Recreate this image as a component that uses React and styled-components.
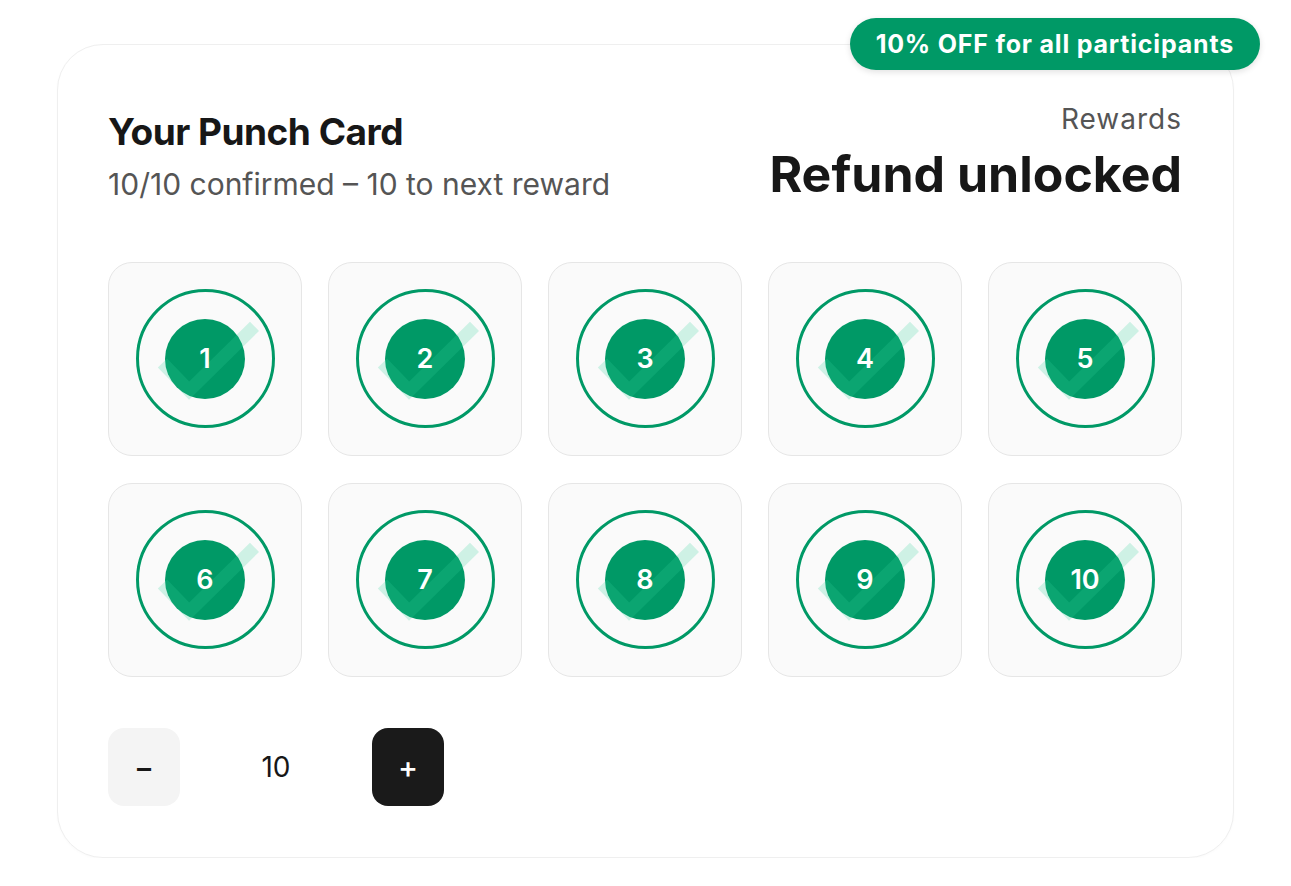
import React, { useState } from "react";
import styled, { createGlobalStyle } from "styled-components";

const GREEN = "#009966";

const Global = createGlobalStyle`
  * { box-sizing: border-box; }
  html, body { margin: 0; padding: 0; background: #ffffff; }
  body { font-family: Inter, "Noto Sans", "Liberation Sans", sans-serif; color: #171717; }
`;

const Page = styled.div`
  padding: 44px 0 0 57px;
`;

const Card = styled.section`
  position: relative;
  width: 1177px;
  border: 1px solid #efefef;
  border-radius: 46px;
  background: #fff;
  padding: 58px 51px 51px 50px;
  box-shadow: 0 1px 3px rgba(0, 0, 0, 0.02);
`;

const Badge = styled.div`
  position: absolute;
  top: -27px;
  right: -27px;
  height: 52px;
  padding: 0 26px;
  display: flex;
  align-items: center;
  border-radius: 999px;
  background: ${GREEN};
  color: #fff;
  font-weight: 700;
  font-size: 25px;
  letter-spacing: 0.8px;
  box-shadow: 0 2px 6px rgba(0, 0, 0, 0.12);
  white-space: nowrap;
`;

const Header = styled.header`
  display: flex;
  justify-content: space-between;
  align-items: flex-end;
`;

const Col = styled.div`
  display: flex;
  flex-direction: column;
  align-items: ${(p) => (p.$right ? "flex-end" : "flex-start")};
`;

const Title = styled.h1`
  margin: 0;
  font-size: 37px;
  line-height: 1.2;
  font-weight: 700;
  letter-spacing: -0.5px;
  color: #171717;
`;

const Subtitle = styled.p`
  margin: 11px 0 0;
  font-size: 30px;
  line-height: 1.2;
  font-weight: 400;
  color: #555;
`;

const Label = styled.div`
  font-size: 28px;
  line-height: 1.2;
  color: #555;
  letter-spacing: 1px;
`;

const Big = styled.div`
  margin-top: 10px;
  font-size: 50px;
  line-height: 1.1;
  font-weight: 700;
  letter-spacing: 0;
  color: #171717;
`;

const Grid = styled.div`
  margin-top: 60px;
  display: grid;
  grid-template-columns: repeat(5, minmax(0, 1fr));
  gap: 27px 26px;
`;

const Tile = styled.div`
  position: relative;
  aspect-ratio: 1 / 1;
  border-radius: 24px;
  border: 1px solid #e6e6e6;
  background: #fafafa;
  display: grid;
  place-items: center;
  overflow: hidden;
`;

const Ring = styled.div`
  grid-area: 1 / 1;
  width: 139px;
  height: 139px;
  border-radius: 50%;
  border: 3.5px solid ${GREEN};
`;

const Dot = styled.div`
  grid-area: 1 / 1;
  width: 80px;
  height: 80px;
  border-radius: 50%;
  background: ${GREEN};
`;

const CheckSvg = styled.svg`
  grid-area: 1 / 1;
  width: 100%;
  height: 100%;
`;

const Num = styled.span`
  grid-area: 1 / 1;
  color: #fff;
  font-size: 27px;
  font-weight: 600;
  position: relative;
`;

const Controls = styled.div`
  margin-top: 51px;
  display: flex;
  align-items: center;
  gap: 24px;
`;

const Btn = styled.button`
  width: 72px;
  height: 78px;
  border: none;
  border-radius: 16px;
  background: ${(p) => (p.$dark ? "#1a1a1a" : "#f4f4f4")};
  color: ${(p) => (p.$dark ? "#fff" : "#171717")};
  font-family: inherit;
  font-size: 30px;
  font-weight: 500;
  display: grid;
  place-items: center;
  padding: 0;
  cursor: pointer;
`;

const Count = styled.span`
  width: 144px;
  text-align: center;
  font-size: 28px;
  color: #171717;
`;

function Check() {
  return (
    <CheckSvg viewBox="0 0 194 194" aria-hidden="true">
      <polyline
        points="54,101 81,129 147,64"
        fill="none"
        stroke="rgba(52, 211, 153, 0.22)"
        strokeWidth="13"
        strokeLinecap="butt"
        strokeLinejoin="miter"
      />
    </CheckSvg>
  );
}

export default function App() {
  const [count, setCount] = useState(10);
  const punches = Array.from({ length: 10 }, (_, i) => i + 1);
  return (
    <Page>
      <Global />
      <Card>
        <Badge>10% OFF for all participants</Badge>
        <Header>
          <Col>
            <Title>Your Punch Card</Title>
            <Subtitle>10/10 confirmed – 10 to next reward</Subtitle>
          </Col>
          <Col $right>
            <Label>Rewards</Label>
            <Big>Refund unlocked</Big>
          </Col>
        </Header>
        <Grid>
          {punches.map((n) => (
            <Tile key={n}>
              <Ring />
              <Dot />
              <Check />
              <Num>{n}</Num>
            </Tile>
          ))}
        </Grid>
        <Controls>
          <Btn onClick={() => setCount((c) => Math.max(0, c - 1))}>−</Btn>
          <Count>{count}</Count>
          <Btn $dark onClick={() => setCount((c) => c + 1)}>+</Btn>
        </Controls>
      </Card>
    </Page>
  );
}
